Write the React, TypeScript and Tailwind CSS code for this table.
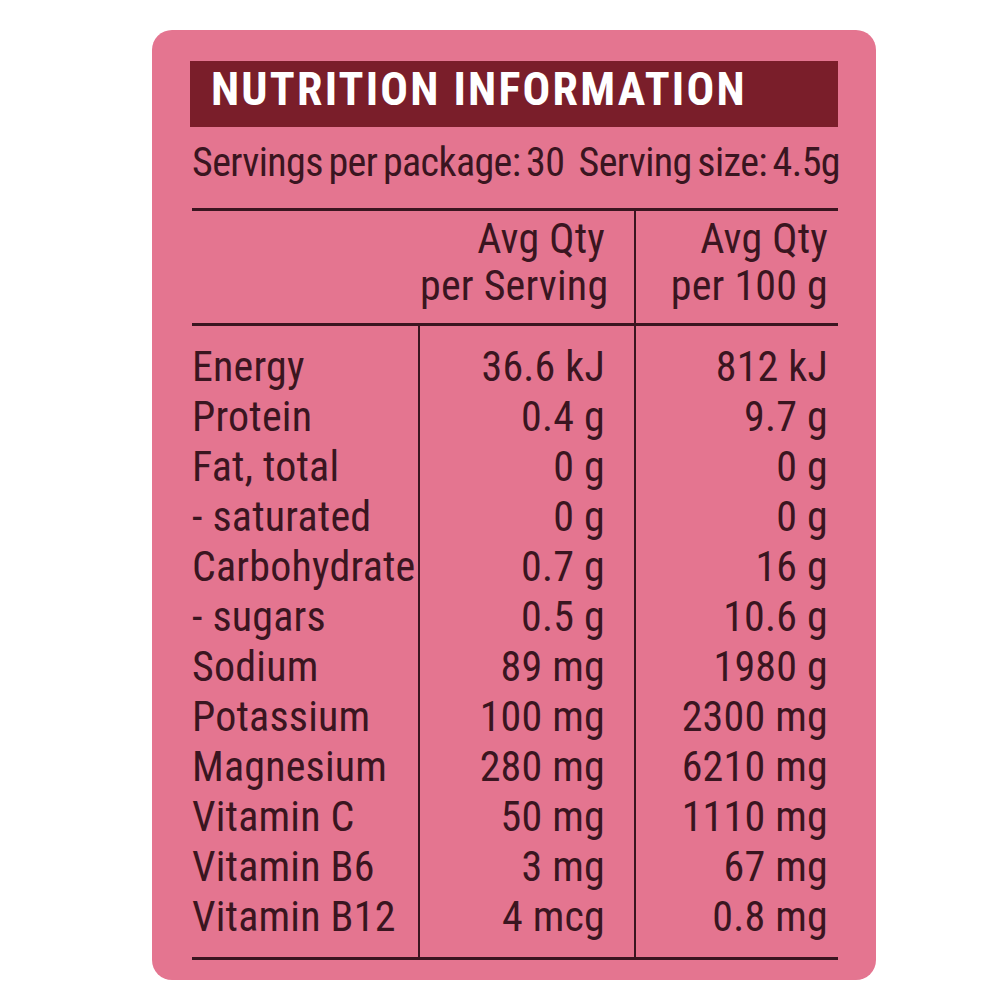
const rows = [
  { name: "Energy", serving: "36.6 kJ", per100: "812 kJ" },
  { name: "Protein", serving: "0.4 g", per100: "9.7 g" },
  { name: "Fat, total", serving: "0 g", per100: "0 g" },
  { name: "- saturated", serving: "0 g", per100: "0 g" },
  { name: "Carbohydrate", serving: "0.7 g", per100: "16 g" },
  { name: "- sugars", serving: "0.5 g", per100: "10.6 g" },
  { name: "Sodium", serving: "89 mg", per100: "1980 g" },
  { name: "Potassium", serving: "100 mg", per100: "2300 mg" },
  { name: "Magnesium", serving: "280 mg", per100: "6210 mg" },
  { name: "Vitamin C", serving: "50 mg", per100: "1110 mg" },
  { name: "Vitamin B6", serving: "3 mg", per100: "67 mg" },
  { name: "Vitamin B12", serving: "4 mcg", per100: "0.8 mg" },
];

export default function App() {
  return (
    <div className="w-[1000px] h-[1000px] bg-white pt-[30px] pl-[152px] font-['Roboto',sans-serif] [font-stretch:condensed] text-[#3a1520]">
      <div className="w-[724px] h-[950px] rounded-[20px] bg-[#e47590] px-[38px] pt-[31px]">
        <div className="h-[66px] bg-[#7a1e2a] pl-[21px] pt-[6px] text-[46px] leading-[44px] font-bold text-white tracking-[2.2px] whitespace-nowrap">
          NUTRITION INFORMATION
        </div>

        <div className="mt-[11px] ml-[2px] w-[648px] flex justify-between text-[40px] leading-[50px] whitespace-nowrap tracking-[-0.6px] [word-spacing:-3px]">
          <span>Servings per package: 30</span>
          <span>Serving size: 4.5g</span>
        </div>

        <div className="mt-[20px] ml-[2px] w-[646px] border-t-[3px] border-[#3a1520] text-[42px] tracking-[0.2px]">
          <div className="grid grid-cols-[228px_216px_202px] leading-[47px]">
            <div />
            <div className="border-r-2 border-[#3a1520] pt-[4px] pb-[14px] pr-[29px] text-right whitespace-nowrap">
              <div>Avg Qty</div>
              <div>per Serving</div>
            </div>
            <div className="pt-[4px] pb-[14px] pr-[10px] text-right whitespace-nowrap">
              <div>Avg Qty</div>
              <div>per 100 g</div>
            </div>
          </div>

          <div className="grid grid-cols-[228px_216px_202px] border-t-[3px] border-b-[3px] border-[#3a1520] leading-[50px]">
            <div className="border-r-2 border-[#3a1520] pt-[16px] pb-[15px]">
              {rows.map((r) => (
                <div key={r.name} className="whitespace-nowrap">
                  {r.name}
                </div>
              ))}
            </div>
            <div className="border-r-2 border-[#3a1520] pt-[16px] pb-[15px] pr-[29px] text-right">
              {rows.map((r) => (
                <div key={r.name} className="whitespace-nowrap">
                  {r.serving}
                </div>
              ))}
            </div>
            <div className="pt-[16px] pb-[15px] pr-[10px] text-right">
              {rows.map((r) => (
                <div key={r.name} className="whitespace-nowrap">
                  {r.per100}
                </div>
              ))}
            </div>
          </div>
        </div>
      </div>
    </div>
  );
}
